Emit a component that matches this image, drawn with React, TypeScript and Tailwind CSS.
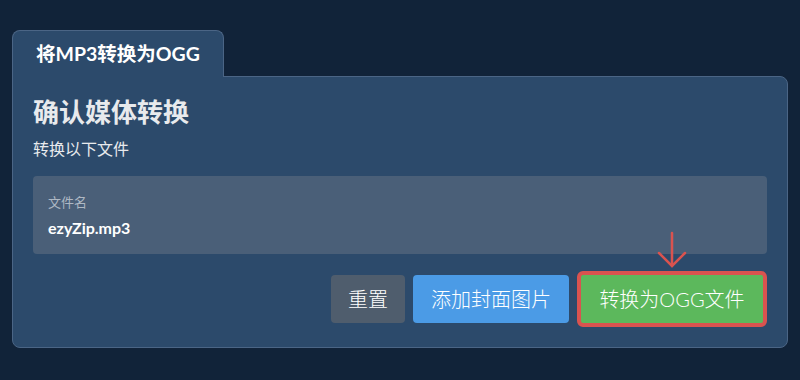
export default function App() {
  const cjk = { fontFamily: 'Lato, "Noto Sans CJK SC", sans-serif' };
  return (
    <div className="h-[380px] w-[800px] bg-[#112339] px-3 pt-[30px]" style={cjk}>
      <div className="relative z-10 -mb-px flex h-[47px] w-[212px] items-center justify-center rounded-t-lg border border-b-0 border-[#4b6585] bg-[#2c4a6b]">
        <span className="text-[19.5px] font-bold text-white">将MP3转换为OGG</span>
      </div>
      <div className="w-[776px] rounded-b-lg rounded-tr-lg border border-[#4b6585] bg-[#2c4a6b] px-5 pt-[19px] pb-5">
        <h1 className="text-[26px] font-bold leading-8 text-[#e8eaed]">确认媒体转换</h1>
        <p className="mt-[10px] text-[16px] leading-[22px] text-[#e8eaed]">转换以下文件</p>
        <div className="mt-4 h-[78px] rounded bg-[#4a5f78] px-[15px] pt-[17px]">
          <div className="text-[13px] leading-[18px] text-[#aeb8c4]">文件名</div>
          <div className="mt-[7px] text-[16px] font-bold leading-5 text-white">ezyZip.mp3</div>
        </div>
        <div className="mt-[17px] flex items-center justify-end gap-2">
          <button className="h-12 rounded bg-[#4f5d6d] px-[17px] text-[20px] font-light text-white">重置</button>
          <button className="h-12 rounded bg-[#4b9be6] px-[18px] text-[20px] font-light text-white">添加封面图片</button>
          <div className="relative">
            <svg className="absolute -top-[40px] left-1/2 -translate-x-1/2" width="30" height="37" viewBox="0 0 30 37" fill="none" stroke="#d9534f" strokeWidth="2.5" strokeLinecap="round">
              <path d="M15 2 V35" />
              <path d="M2 22 L15 35 L28 22" />
            </svg>
            <button className="h-14 w-[190px] rounded-md border-4 border-[#d9534f] bg-[#5cb85c] text-[20px] font-light text-white">转换为OGG文件</button>
          </div>
        </div>
      </div>
    </div>
  );
}
